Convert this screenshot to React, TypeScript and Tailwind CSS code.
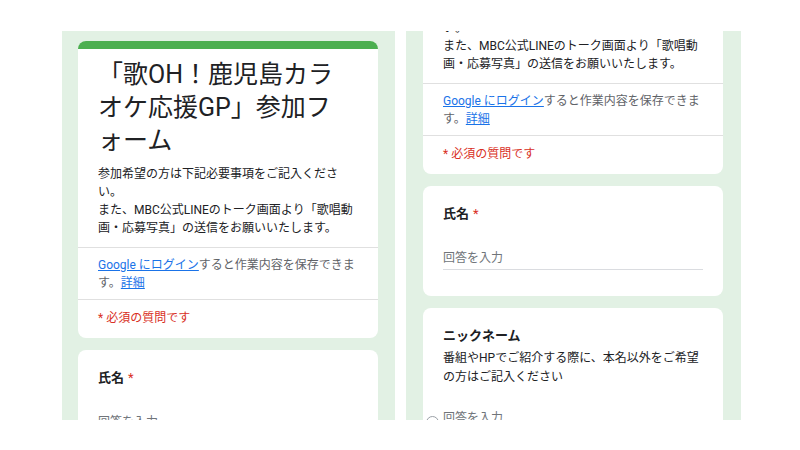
import React from "react";

function HeaderCard() {
  return (
    <div className="overflow-hidden rounded-[8px] bg-white">
      <div className="h-[8px] bg-[#4caf50]" />
      <div className="px-[20px] pb-[10px] pt-[9px]">
        <h1 className="text-[25px] font-normal leading-[33px] text-[#202124]">
          「歌OH！鹿児島カラ
          <br />
          オケ応援GP」参加フ
          <br />
          ォーム
        </h1>
        <p className="mt-[8px] text-[12px] leading-[18px] text-[#202124]">
          参加希望の方は下記必要事項をご記入くださ
          <br />
          い。
          <br />
          また、MBC公式LINEのトーク画面より「歌唱動
          <br />
          画・応募写真」の送信をお願いいたします。
        </p>
      </div>
      <div className="border-t border-[#e0e0e0] px-[20px] pb-[7px] pt-[8px] text-[12px] leading-[18px] text-[#5f6368]">
        <span className="text-[#1a73e8] underline">Google にログイン</span>
        すると作業内容を保存できま
        <br />
        す。
        <span className="text-[#1a73e8] underline">詳細</span>
      </div>
      <div className="border-t border-[#e0e0e0] px-[20px] pb-[11px] pt-[9px] text-[12px] leading-[18px] text-[#d93025]">
        * 必須の質問です
      </div>
    </div>
  );
}

function Question({
  title,
  required,
  help,
}: {
  title: string;
  required?: boolean;
  help?: React.ReactNode;
}) {
  return (
    <div className="rounded-[8px] bg-white px-[20px] pb-[26px] pt-[18px]">
      <div className="text-[13px] font-bold leading-[20px] text-[#202124]">
        {title}
        {required && (
          <span className="ml-[4px] font-normal text-[#d93025]">*</span>
        )}
      </div>
      {help && (
        <div className="mt-[3px] text-[12px] leading-[19px] text-[#202124]">
          {help}
        </div>
      )}
      <div
        className={`${help ? "mt-[22px]" : "mt-[25px]"} border-b border-[#dadce0] pb-[2px] text-[12px] leading-[18px] text-[#70757a]`}
      >
        回答を入力
      </div>
    </div>
  );
}

function FormCards() {
  return (
    <div className="flex w-[300px] flex-col gap-[12px]">
      <HeaderCard />
      <Question title="氏名" required />
      <Question
        title="ニックネーム"
        help={
          <>
            番組やHPでご紹介する際に、本名以外をご希望
            <br />
            の方はご記入ください
          </>
        }
      />
    </div>
  );
}

export default function App() {
  return (
    <div className="flex h-[450px] w-[800px] gap-[11px] bg-white pl-[62px] pt-[31px] font-['Roboto','Noto_Sans_CJK_JP',sans-serif]">
      {/* left screenshot */}
      <div className="h-[389px] w-[333px] overflow-hidden bg-[#e2f1e4] pl-[16px] pt-[10px]">
        <FormCards />
      </div>

      {/* right screenshot, scrolled down */}
      <div className="relative h-[389px] w-[335px] overflow-hidden bg-[#e2f1e4] pl-[17px]">
        <div className="mt-[-154px]">
          <FormCards />
        </div>
        <div className="absolute left-[20px] top-[385px] h-[13px] w-[13px] rounded-full border-[1.5px] border-[#9aa0a6] bg-white" />
      </div>
    </div>
  );
}
